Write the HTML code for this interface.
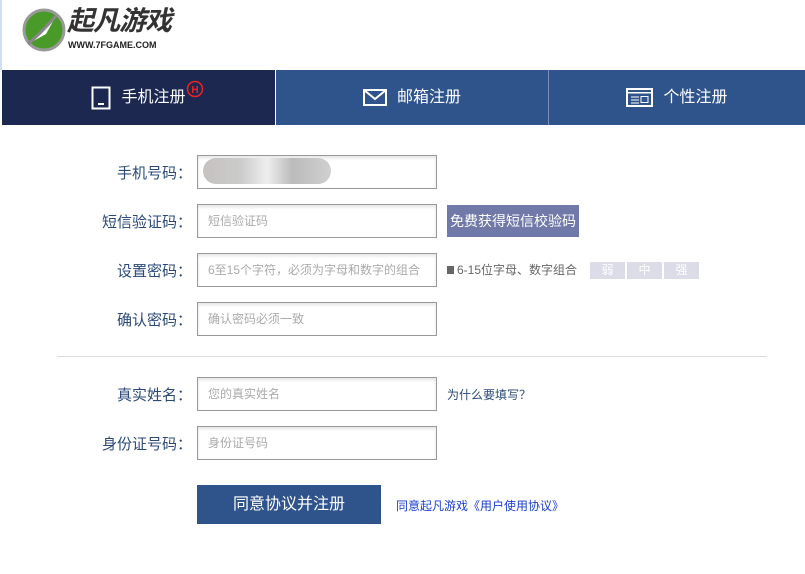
<!DOCTYPE html>
<html><head><meta charset="utf-8"><style>
body{margin:0;width:805px;height:574px;background:#fff;font-family:"Liberation Sans","Noto Sans CJK SC",sans-serif;position:relative;overflow:hidden}
.a{position:absolute}
.tab{position:absolute;top:70px;height:55px;color:#fff;font-size:16px;line-height:55px;display:flex;align-items:center;justify-content:center;gap:10px}
.lab{position:absolute;right:613px;font-size:15px;color:#2b4a78;text-align:right;white-space:nowrap}
.inp{position:absolute;left:197px;width:238px;height:32px;border:1px solid #999;box-shadow:inset 0 2px 3px #e4e4e4;font-size:12px;color:#aaa;line-height:32px;text-indent:10px;box-sizing:content-box;white-space:nowrap;overflow:hidden}
.s{display:inline-block;width:35px;height:17px;background:#dcdbe8;color:#fff;font-size:12px;text-align:center;line-height:17px;margin-right:2px}
</style></head><body>
<div class="a" style="left:0;top:0;width:2px;height:70px;background:#cfe0f3"></div>
<svg class="a" style="left:22px;top:8px" width="44" height="44" viewBox="0 0 44 44"><circle cx="22" cy="22" r="20" fill="#4a9a2a"/><circle cx="22" cy="22" r="20" fill="none" stroke="#999" stroke-width="3"/><path d="M6 36 L34 8 L24 26 Z" fill="#fff"/><path d="M6 36 Q18 26 34 8" stroke="#888" stroke-width="3" fill="none"/></svg>
<div class="a" style="left:67px;top:5px;font-size:27px;line-height:32px;font-weight:bold;font-style:italic;color:#333;letter-spacing:-1px">起凡游戏</div>
<div class="a" style="left:68px;top:40px;font-size:9px;line-height:10px;font-weight:bold;color:#222">WWW.7FGAME.COM</div>
<div class="tab" style="left:2px;width:273px;background:#1c2850"><svg width="20" height="24"><rect x="1.5" y="1.5" width="17" height="21" fill="none" stroke="#fff" stroke-width="2"/><rect x="7" y="17" width="6" height="2" fill="#fff"/></svg>手机注册<svg class="a" style="left:184px;top:10px" width="18" height="18"><circle cx="9" cy="9" r="7.5" fill="none" stroke="#e22" stroke-width="1.5"/><text x="9" y="13" font-size="10" font-weight="bold" fill="#e22" text-anchor="middle" font-family="Liberation Sans">H</text></svg></div>
<div class="tab" style="left:276px;width:272px;background:#2f548c"><svg width="24" height="17"><rect x="1" y="1" width="22" height="15" fill="none" stroke="#fff" stroke-width="2"/><path d="M1 1 L12 10 L23 1" stroke="#fff" stroke-width="2" fill="none"/></svg>邮箱注册</div>
<div class="tab" style="left:549px;width:256px;background:#2f548c"><svg width="27" height="19"><rect x="1" y="1" width="25" height="17" fill="none" stroke="#fff" stroke-width="2"/><rect x="1" y="4" width="25" height="1.5" fill="#fff"/><path d="M5 9h8M5 12h8M5 15h8" stroke="#fff"/><rect x="15" y="8.5" width="7" height="6" fill="none" stroke="#fff"/></svg>个性注册</div>
<div class="a" style="left:548px;top:70px;width:1px;height:55px;background:#7a8fb8"></div>

<div class="lab" style="top:162px">手机号码：</div>
<div class="inp" style="top:155px"><div class="a" style="left:5px;top:2px;width:128px;height:26px;border-radius:13px;background:linear-gradient(90deg,#c5c2c0,#ccc 30%,#eee 50%,#bbb 70%,#d0d0d0)"></div></div>
<div class="lab" style="top:211px">短信验证码：</div>
<div class="inp" style="top:204px">短信验证码</div>
<div class="a" style="left:447px;top:205px;width:132px;height:32px;background:#7079a8;color:#fff;font-size:14px;line-height:32px;text-align:center">免费获得短信校验码</div>
<div class="lab" style="top:260px">设置密码：</div>
<div class="inp" style="top:253px">6至15个字符，必须为字母和数字的组合</div>
<div class="a" style="left:447px;top:261px;font-size:12px;color:#666;white-space:nowrap"><span style="display:inline-block;width:7px;height:8px;background:#666;margin-right:3px"></span>6-15位字母、数字组合</div>
<div class="a" style="left:590px;top:261px"><span class="s">弱</span><span class="s">中</span><span class="s">强</span></div>
<div class="lab" style="top:309px">确认密码：</div>
<div class="inp" style="top:302px">确认密码必须一致</div>
<div class="a" style="left:57px;top:356px;width:710px;height:1px;background:#ddd"></div>
<div class="lab" style="top:384px">真实姓名：</div>
<div class="inp" style="top:377px">您的真实姓名</div>
<div class="a" style="left:447px;top:386px;font-size:12px;color:#2b4a78">为什么要填写？</div>
<div class="lab" style="top:433px">身份证号码：</div>
<div class="inp" style="top:426px">身份证号码</div>
<div class="a" style="left:197px;top:485px;width:184px;height:39px;background:#2f548c;color:#fff;font-size:16px;line-height:39px;text-align:center">同意协议并注册</div>
<div class="a" style="left:396px;top:497px;font-size:12px;color:#1a3fc8">同意起凡游戏《用户使用协议》</div>
</body></html>
